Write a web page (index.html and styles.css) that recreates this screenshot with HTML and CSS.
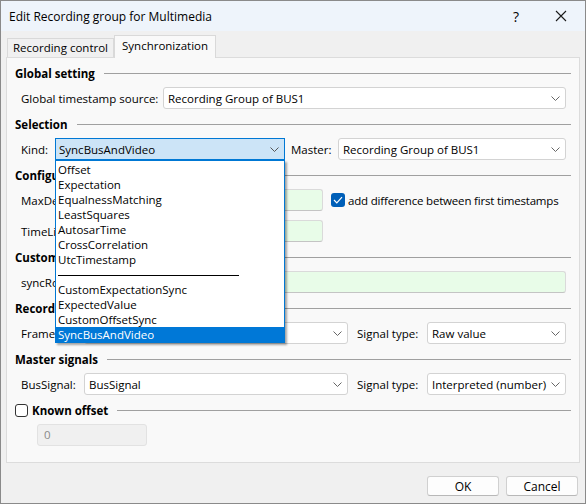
FILE: index.html
```html
<!DOCTYPE html>
<html lang="en">
<head>
    <meta charset="UTF-8">
    <link rel="stylesheet" href="styles.css">
    <title>Edit Recording group for Multimedia</title>
</head>
<body>
    <div class="window">
        <div class="titlebar">
            <span class="title">Edit Recording group for Multimedia</span>
            <span class="help">?</span>
            <svg class="close" width="12" height="12" viewBox="0 0 12 12">
                <path d="M1 1 L11 11 M11 1 L1 11" stroke="#1a1a1a" stroke-width="1.1" fill="none"/>
            </svg>
        </div>

        <div class="tabs">
            <div class="tab">Recording control</div>
            <div class="tab active">Synchronization</div>
        </div>

        <div class="panel">
            <div class="section">
                <div class="heading"><span>Global setting</span></div>
                <div class="rows">
                    <div class="row">
                        <span class="label w-global">Global timestamp source:</span>
                        <div class="combo grow">Recording Group of BUS1<svg class="chev" width="9" height="5" viewBox="0 0 9 5"><path d="M0.5 0.5 L4.5 4.5 L8.5 0.5" stroke="#666" fill="none"/></svg></div>
                    </div>
                </div>
            </div>

            <div class="section">
                <div class="heading"><span>Selection</span></div>
                <div class="rows">
                    <div class="row">
                        <span class="label w-kind">Kind:</span>
                        <div class="combo focused w-kindcombo">SyncBusAndVideo<svg class="chev" width="9" height="5" viewBox="0 0 9 5"><path d="M0.5 0.5 L4.5 4.5 L8.5 0.5" stroke="#555" fill="none"/></svg></div>
                        <span class="label w-master">Master:</span>
                        <div class="combo grow">Recording Group of BUS1<svg class="chev" width="9" height="5" viewBox="0 0 9 5"><path d="M0.5 0.5 L4.5 4.5 L8.5 0.5" stroke="#666" fill="none"/></svg></div>
                    </div>
                </div>
            </div>

            <div class="section">
                <div class="heading"><span>Configuration</span></div>
                <div class="rows">
                    <div class="row">
                        <span class="label w-config">MaxDeviation:</span>
                        <div class="input green w-short"></div>
                        <span class="check checked">
                            <svg width="10" height="8" viewBox="0 0 10 8"><path d="M1 4 L3.8 6.8 L9 1.2" stroke="#fff" stroke-width="1.2" fill="none"/></svg>
                        </span>
                        <span class="check-text">add difference between first timestamps</span>
                    </div>
                    <div class="row">
                        <span class="label w-config">TimeLimit:</span>
                        <div class="input green w-short"></div>
                    </div>
                </div>
            </div>

            <div class="section">
                <div class="heading"><span>Custom synchronization</span></div>
                <div class="rows">
                    <div class="row">
                        <span class="label w-config">syncRoutine:</span>
                        <div class="input green grow"></div>
                    </div>
                </div>
            </div>

            <div class="section">
                <div class="heading"><span>Recorded signals</span></div>
                <div class="rows">
                    <div class="row">
                        <span class="label w-signal">Frame:</span>
                        <div class="combo w-signalcombo">FrameSignal<svg class="chev" width="9" height="5" viewBox="0 0 9 5"><path d="M0.5 0.5 L4.5 4.5 L8.5 0.5" stroke="#666" fill="none"/></svg></div>
                        <span class="label w-type">Signal type:</span>
                        <div class="combo grow">Raw value<svg class="chev" width="9" height="5" viewBox="0 0 9 5"><path d="M0.5 0.5 L4.5 4.5 L8.5 0.5" stroke="#666" fill="none"/></svg></div>
                    </div>
                </div>
            </div>

            <div class="section">
                <div class="heading"><span>Master signals</span></div>
                <div class="rows">
                    <div class="row">
                        <span class="label w-signal">BusSignal:</span>
                        <div class="combo w-signalcombo">BusSignal<svg class="chev" width="9" height="5" viewBox="0 0 9 5"><path d="M0.5 0.5 L4.5 4.5 L8.5 0.5" stroke="#666" fill="none"/></svg></div>
                        <span class="label w-type">Signal type:</span>
                        <div class="combo grow">Interpreted (number)<svg class="chev" width="9" height="5" viewBox="0 0 9 5"><path d="M0.5 0.5 L4.5 4.5 L8.5 0.5" stroke="#666" fill="none"/></svg></div>
                    </div>
                </div>
            </div>

            <div class="section">
                <div class="heading"><span class="check"></span><span>Known offset</span></div>
                <div class="rows">
                    <div class="input disabled">0</div>
                </div>
            </div>
        </div>

        <div class="footer">
            <button>OK</button>
            <button>Cancel</button>
        </div>

        <div class="dropdown">
            <div class="item">Offset</div>
            <div class="item">Expectation</div>
            <div class="item">EqualnessMatching</div>
            <div class="item">LeastSquares</div>
            <div class="item">AutosarTime</div>
            <div class="item">CrossCorrelation</div>
            <div class="item">UtcTimestamp</div>
            <div class="separator"></div>
            <div class="item">CustomExpectationSync</div>
            <div class="item">ExpectedValue</div>
            <div class="item">CustomOffsetSync</div>
            <div class="item selected">SyncBusAndVideo</div>
        </div>
    </div>
</body>
</html>
```

FILE: styles.css
```css
body {
    margin: 0;
    background-color: #f0f0f0;
    color: #000;
    font-family: "Open Sans", "Segoe UI", sans-serif;
    font-size: 11.5px;
}

.window {
    position: relative;
    width: 586px;
    height: 504px;
    box-sizing: border-box;
    border: 1px solid #8a8a8a;
    background-color: #f0f0f0;
    display: flex;
    flex-direction: column;
}

.titlebar {
    height: 30px;
    flex-shrink: 0;
    background-color: #eef4fb;
    display: flex;
    align-items: center;
    padding-left: 8px;
    font-size: 12px;
}

.title {
    flex: 1;
}

.help {
    font-size: 14px;
    margin-right: 36px;
}

.close {
    margin-right: 18px;
}

.tabs {
    display: flex;
    align-items: flex-end;
    margin-top: 4px;
    padding-left: 6px;
    height: 22px;
}

.tab {
    box-sizing: border-box;
    height: 19px;
    line-height: 18px;
    padding: 0 5px;
    border: 1px solid #d9d9d9;
    border-bottom: none;
    background-color: #f0f0f0;
}

.tab.active {
    height: 23px;
    line-height: 20px;
    padding: 0 7px;
    margin-bottom: -1px;
    background-color: #f9f9f9;
    position: relative;
    z-index: 1;
}

.panel {
    box-sizing: border-box;
    height: 406px;
    margin: 0 5px;
    padding: 7px 8px;
    border: 1px solid #dcdcdc;
    background-color: #f9f9f9;
}

.section + .section {
    margin-top: 7px;
}

.heading {
    display: flex;
    align-items: center;
    height: 16px;
    font-weight: bold;
}

.heading::after {
    content: "";
    flex: 1;
    height: 1px;
    margin-left: 9px;
    background-color: #a0a0a0;
}

.rows {
    display: flex;
    flex-direction: column;
    gap: 9px;
    margin-top: 6px;
    padding: 0 5px 0 6px;
}

.row {
    display: flex;
    align-items: center;
    height: 22px;
}

.label {
    flex-shrink: 0;
    white-space: nowrap;
}

.w-global { width: 142px; }
.w-kind { width: 34px; }
.w-master { width: 47px; margin-left: 6px; }
.w-config { width: 90px; }
.w-signal { width: 63px; }
.w-type { width: 70px; margin-left: 9px; }

.combo {
    box-sizing: border-box;
    height: 22px;
    display: flex;
    align-items: center;
    padding-left: 4px;
    border: 1px solid #d3d3d3;
    border-radius: 3px;
    background-color: #fff;
    white-space: nowrap;
}

.combo .chev {
    margin-left: auto;
    margin-right: 5px;
}

.combo.focused {
    padding-left: 3px;
    background-color: #cce4f7;
    border-color: #0078d4;
    border-radius: 0;
}

.grow {
    flex: 1;
}

.w-kindcombo { width: 230px; }
.w-signalcombo { width: 264px; }

.input {
    box-sizing: border-box;
    height: 22px;
    border: 1px solid #dadada;
    border-bottom-color: #c4c4c4;
    border-radius: 3px;
}

.input.green {
    background-color: #e8fce8;
}

.w-short { width: 212px; }

.input.disabled {
    width: 110px;
    margin-left: 16px;
    padding-left: 6px;
    line-height: 20px;
    color: #8a8a8a;
    background-color: #f0f0f0;
    border-color: #e2e2e2;
}

.check {
    box-sizing: border-box;
    width: 13px;
    height: 13px;
    flex-shrink: 0;
    border: 1px solid #333;
    border-radius: 3px;
    background-color: #fff;
    margin-right: 4px;
    display: flex;
    align-items: center;
    justify-content: center;
}

.check.checked {
    width: 14px;
    height: 14px;
    margin-left: 8px;
    margin-right: 3px;
    border: none;
    background-color: #005fb8;
}

.check-text {
    white-space: nowrap;
    letter-spacing: -0.18px;
}

.footer {
    flex: 1;
    display: flex;
    justify-content: flex-end;
    align-items: flex-start;
    gap: 7px;
    padding: 13px 7px 0 0;
}

.footer button {
    width: 72px;
    height: 20px;
    padding: 0;
    font-family: inherit;
    font-size: 12px;
    color: #000;
    background-color: #fdfdfd;
    border: 1px solid #d0d0d0;
    border-bottom-color: #b8b8b8;
    border-radius: 3px;
}

.dropdown {
    position: absolute;
    left: 54px;
    top: 159px;
    width: 230px;
    box-sizing: border-box;
    padding-top: 1px;
    border: 1px solid #0078d4;
    background-color: #fff;
    box-shadow: 2px 2px 2px rgba(0, 0, 0, 0.35);
    z-index: 5;
}

.item {
    height: 15px;
    line-height: 15px;
    padding-left: 2px;
    white-space: nowrap;
}

.item.selected {
    background-color: #0078d7;
    color: #fff;
}

.separator {
    height: 15px;
    position: relative;
}

.separator::after {
    content: "";
    position: absolute;
    left: 2px;
    top: 8px;
    width: 181px;
    height: 1px;
    background-color: #000;
}
```
